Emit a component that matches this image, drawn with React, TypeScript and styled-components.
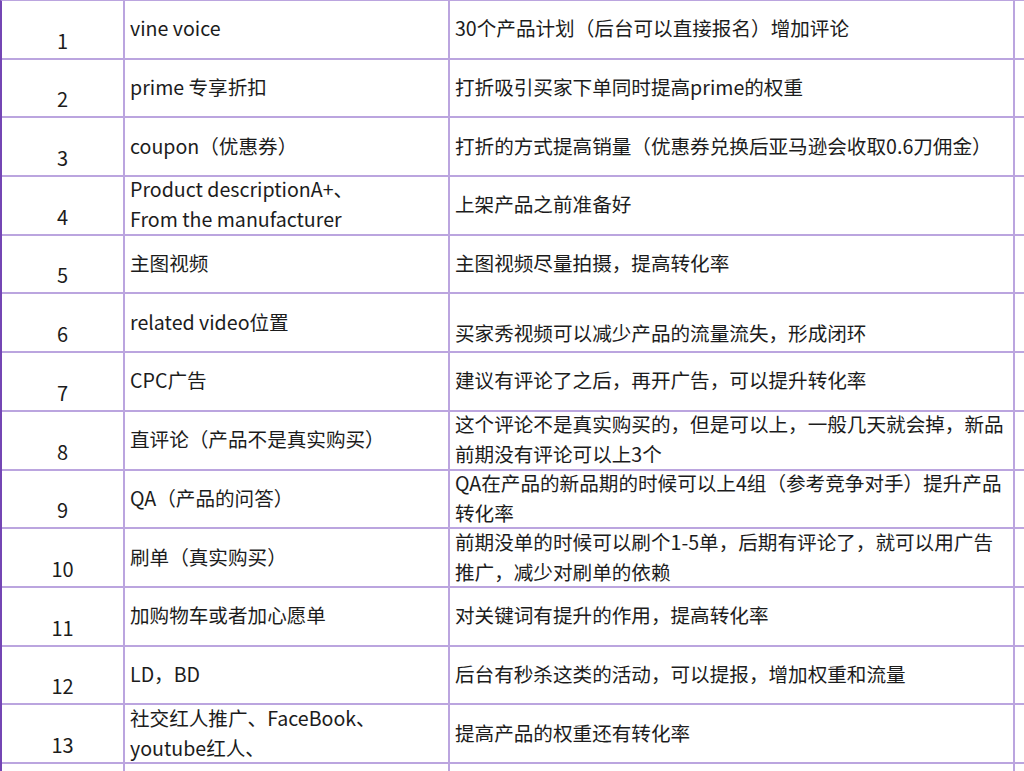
import styled, { createGlobalStyle } from 'styled-components'

interface Row {
    name: string[]
    desc: string[]
    descBottom?: boolean
}

const rows: Row[] = [
    { name: ['vine voice'], desc: ['30个产品计划（后台可以直接报名）增加评论'] },
    { name: ['prime 专享折扣'], desc: ['打折吸引买家下单同时提高prime的权重'] },
    { name: ['coupon（优惠券）'], desc: ['打折的方式提高销量（优惠券兑换后亚马逊会收取0.6刀佣金）'] },
    { name: ['Product descriptionA+、', 'From the manufacturer'], desc: ['上架产品之前准备好'] },
    { name: ['主图视频'], desc: ['主图视频尽量拍摄，提高转化率'] },
    { name: ['related video位置'], desc: ['买家秀视频可以减少产品的流量流失，形成闭环'], descBottom: true },
    { name: ['CPC广告'], desc: ['建议有评论了之后，再开广告，可以提升转化率'] },
    { name: ['直评论（产品不是真实购买）'], desc: ['这个评论不是真实购买的，但是可以上，一般几天就会掉，新品', '前期没有评论可以上3个'] },
    { name: ['QA（产品的问答）'], desc: ['QA在产品的新品期的时候可以上4组（参考竞争对手）提升产品', '转化率'] },
    { name: ['刷单（真实购买）'], desc: ['前期没单的时候可以刷个1-5单，后期有评论了，就可以用广告', '推广，减少对刷单的依赖'] },
    { name: ['加购物车或者加心愿单'], desc: ['对关键词有提升的作用，提高转化率'] },
    { name: ['LD，BD'], desc: ['后台有秒杀这类的活动，可以提报，增加权重和流量'] },
    { name: ['社交红人推广、FaceBook、', 'youtube红人、'], desc: ['提高产品的权重还有转化率'] },
]

const App = () => {
    return <>
        <GlobalStyle />
        <Sheet>
            {rows.map((row, i) => [
                <NumCell key={`n${i}`}>{i + 1}</NumCell>,
                <TextCell key={`a${i}`}>
                    {row.name.map((l, j) => <Line key={j}>{l}</Line>)}
                </TextCell>,
                <TextCell key={`b${i}`} $bottom={row.descBottom}>
                    {row.desc.map((l, j) => <Line key={j}>{l}</Line>)}
                </TextCell>,
                <EdgeCell key={`c${i}`} />,
            ])}
            <NumCell />
            <TextCell />
            <TextCell />
            <EdgeCell />
        </Sheet>
    </>
}

export default App

const GlobalStyle = createGlobalStyle`
    html, body {
        margin: 0;
        padding: 0;
        background: #ffffff;
        overflow: hidden;
    }
    body {
        font-family: "Noto Sans CJK SC", "Noto Sans", sans-serif;
        color: #1c1c1c;
    }
`
const Sheet = styled.div`
    display: grid;
    grid-template-columns: 123px 325px 565px 1fr;
    grid-template-rows: repeat(13, 58.7px) 20px;
    width: 1024px;
    height: 771px;
    box-sizing: border-box;
    border-left: 2px solid #7446b4;
    border-top: 1px solid #bba5df;
    overflow: hidden;
`
const Cell = styled.div`
    box-sizing: border-box;
    border-right: 2px solid #bba5df;
    border-bottom: 2px solid #bba5df;
    font-size: 19.6px;
    line-height: 30px;
    min-height: 0;
`
const NumCell = styled(Cell)`
    display: flex;
    align-items: flex-end;
    justify-content: center;
    padding-bottom: 2px;
    font-size: 20px;
`
const TextCell = styled(Cell)<{ $bottom?: boolean }>`
    display: flex;
    flex-direction: column;
    justify-content: ${p => p.$bottom ? 'flex-end' : 'center'};
    padding: ${p => p.$bottom ? '0 4px 3px 5px' : '0 4px 2px 5px'};
    white-space: nowrap;
`
const EdgeCell = styled(Cell)`
    border-right: none;
`
const Line = styled.span`
    display: block;
    flex: none;
`
